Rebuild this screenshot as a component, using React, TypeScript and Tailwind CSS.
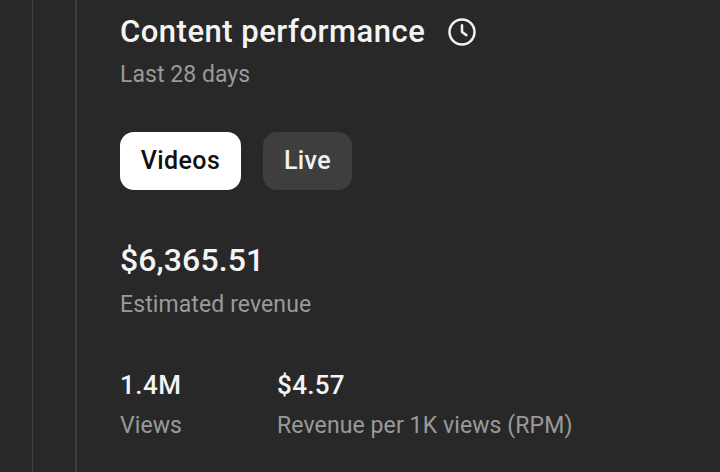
const App = () => {
  return (
    <div className="h-[472px] w-[720px] overflow-hidden bg-[#282828] flex font-['Roboto',sans-serif]">
      <div className="w-[33px] shrink-0 border-r border-[#404040]" />
      <div className="w-[44px] shrink-0 border-r-2 border-[#3d3d3d]" />
      <main className="pl-[43px] pt-[14px] flex-1">
        <div className="flex items-center gap-[22px]">
          <h1 className="text-[31px] leading-[36px] tracking-[0.5px] font-medium text-[#f4f4f4]">Content performance</h1>
          <svg width="30" height="30" viewBox="0 0 24 24" fill="none" stroke="#f1f1f1" strokeWidth="2" strokeLinecap="round" strokeLinejoin="round">
            <circle cx="12" cy="12" r="10" />
            <path d="M12 6.5V12l3.5 2.5" />
          </svg>
        </div>
        <p className="mt-[11px] text-[23px] leading-[28px] tracking-[0.05px] text-[#9a9a9a]">Last 28 days</p>
        <div className="mt-[43px] flex gap-[22px]">
          <button className="h-[58px] w-[121px] rounded-[14px] bg-white text-[#111111] text-[25px] tracking-[0.4px] font-medium">Videos</button>
          <button className="h-[58px] w-[89px] rounded-[14px] bg-[#3e3e3e] text-[#f1f1f1] text-[25px] tracking-[0.4px] font-medium">Live</button>
        </div>
        <p className="mt-[50px] text-[32px] leading-[40px] tracking-[0.1px] font-medium text-[#f4f4f4]">$6,365.51</p>
        <p className="mt-[11px] text-[23px] leading-[28px] tracking-[0.1px] text-[#9a9a9a]">Estimated revenue</p>
        <div className="mt-[49px] flex gap-[95px]">
          <div>
            <p className="text-[26px] leading-[34px] tracking-[0.5px] font-medium text-[#f4f4f4]">1.4M</p>
            <p className="mt-[10px] text-[23px] leading-[28px] tracking-[0.1px] text-[#9a9a9a]">Views</p>
          </div>
          <div>
            <p className="text-[26px] leading-[34px] tracking-[0.3px] font-medium text-[#f4f4f4]">$4.57</p>
            <p className="mt-[10px] text-[23px] leading-[28px] tracking-[0.1px] text-[#9a9a9a]">Revenue per 1K views (RPM)</p>
          </div>
        </div>
      </main>
    </div>
  );
};

export default App;
